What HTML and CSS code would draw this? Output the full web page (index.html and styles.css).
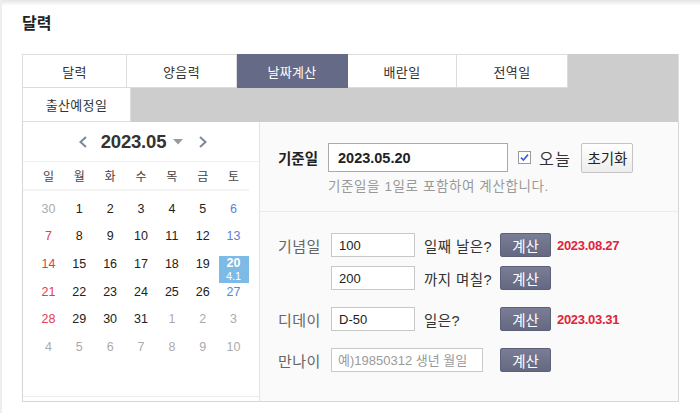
FILE: index.html
```html
<!DOCTYPE html>
<html lang="ko">
<head>
<meta charset="utf-8">
<title>달력</title>
<link rel="stylesheet" href="styles.css">
</head>
<body>
<div class="page">
  <div class="topbar"></div>
  <h2 class="title">달력</h2>
  <div class="tabs">
    <div class="tabrow">
      <a class="tab t1">달력</a>
      <a class="tab t2">양음력</a>
      <a class="tab t3 active">날짜계산</a>
      <a class="tab t4">배란일</a>
      <a class="tab t5">전역일</a>
    </div>
    <div class="tabrow">
      <a class="tab t6">출산예정일</a>
    </div>
  </div>
  <div class="panel">
    <div class="cal">
      <div class="cal-head">
        <svg class="prev" width="10" height="12" viewBox="0 0 10 12"><path d="M8 1 L2.5 6 L8 11" fill="none" stroke="#7d879c" stroke-width="2"/></svg>
        <span class="ym">2023.05</span>
        <svg class="caret" width="10" height="6" viewBox="0 0 10 6"><path d="M0 0 H10 L5 5.5 Z" fill="#9a9a9a"/></svg>
        <svg class="next" width="10" height="12" viewBox="0 0 10 12"><path d="M2 1 L7.5 6 L2 11" fill="none" stroke="#7d879c" stroke-width="2"/></svg>
      </div>
      <div class="week">
        <span>일</span><span>월</span><span>화</span><span>수</span><span>목</span><span>금</span><span>토</span>
      </div>
      <div class="days">
        <div class="d other"><span>30</span></div><div class="d"><span>1</span></div><div class="d"><span>2</span></div><div class="d"><span>3</span></div><div class="d"><span>4</span></div><div class="d"><span>5</span></div><div class="d sat"><span>6</span></div>
        <div class="d sun"><span>7</span></div><div class="d"><span>8</span></div><div class="d"><span>9</span></div><div class="d"><span>10</span></div><div class="d"><span>11</span></div><div class="d"><span>12</span></div><div class="d sat"><span>13</span></div>
        <div class="d sun"><span>14</span></div><div class="d"><span>15</span></div><div class="d"><span>16</span></div><div class="d"><span>17</span></div><div class="d"><span>18</span></div><div class="d"><span>19</span></div><div class="d today"><span>20<small>4.1</small></span></div>
        <div class="d sun"><span>21</span></div><div class="d"><span>22</span></div><div class="d"><span>23</span></div><div class="d"><span>24</span></div><div class="d"><span>25</span></div><div class="d"><span>26</span></div><div class="d sat"><span>27</span></div>
        <div class="d sun"><span>28</span></div><div class="d"><span>29</span></div><div class="d"><span>30</span></div><div class="d"><span>31</span></div><div class="d other"><span>1</span></div><div class="d other"><span>2</span></div><div class="d other"><span>3</span></div>
        <div class="d other"><span>4</span></div><div class="d other"><span>5</span></div><div class="d other"><span>6</span></div><div class="d other"><span>7</span></div><div class="d other"><span>8</span></div><div class="d other"><span>9</span></div><div class="d other"><span>10</span></div>
      </div>
      <div class="cal-foot"></div>
    </div>
    <div class="calc">
      <div class="base">
        <div class="base-row">
          <span class="base-label">기준일</span>
          <input class="base-input" type="text" value="2023.05.20">
          <svg class="chk" width="13" height="13" viewBox="0 0 13 13"><rect x="0.5" y="0.5" width="12" height="12" fill="#fff" stroke="#9a9a9a"/><path d="M3 6.7 L5.4 9.1 L10 3.6" fill="none" stroke="#3d62e0" stroke-width="1.7"/></svg>
          <span class="today-label">오늘</span>
          <button class="reset">초기화</button>
        </div>
        <p class="hint">기준일을 1일로 포함하여 계산합니다.</p>
      </div>
      <div class="rows">
        <div class="row">
          <span class="label">기념일</span>
          <input class="field" type="text" value="100">
          <span class="q">일째 날은?</span>
          <button class="go">계산</button>
          <span class="res">2023.08.27</span>
        </div>
        <div class="row r2">
          <span class="label"></span>
          <input class="field" type="text" value="200">
          <span class="q">까지 며칠?</span>
          <button class="go">계산</button>
        </div>
        <div class="row r3">
          <span class="label">디데이</span>
          <input class="field" type="text" value="D-50">
          <span class="q">일은?</span>
          <button class="go">계산</button>
          <span class="res">2023.03.31</span>
        </div>
        <div class="row r3">
          <span class="label">만나이</span>
          <input class="field wide" type="text" placeholder="예)19850312 생년 월일">
          <button class="go">계산</button>
        </div>
      </div>
    </div>
  </div>
</div>
</body>
</html>
```
FILE: styles.css
```css
html, body {
  margin: 0;
  padding: 0;
  background: #fff;
}
body {
  font-family: "Liberation Sans", "Noto Sans CJK KR", sans-serif;
  color: #333;
}
.page {
  height: 413px;
  box-sizing: border-box;
  border-left: 2px solid #eceef2;
  padding-left: 20px;
  overflow: hidden;
}
.topbar {
  height: 6px;
  margin-left: -20px;
  background: linear-gradient(#e4e4e4, #fff);
}
.title {
  margin: 8px 0 0;
  font-size: 16px;
  line-height: 20px;
  font-weight: bold;
  color: #222;
}
.tabs {
  margin-top: 20px;
  width: 657px;
  box-sizing: border-box;
  background: #cdcdcd;
  border-right: 1px solid #e0e0e0;
}
.tabrow {
  display: flex;
  height: 34px;
}
.tab {
  box-sizing: border-box;
  height: 34px;
  background: #fff;
  border: 1px solid #dcdcdc;
  border-left: none;
  display: flex;
  align-items: center;
  justify-content: center;
  font-size: 13px;
  letter-spacing: 0.3px;
  color: #333;
}
.t1 { width: 105px; border-left: 1px solid #dcdcdc; }
.t2 { width: 110px; }
.t3 { width: 111px; }
.t4 { width: 109px; }
.t5 { width: 111px; }
.t6 { width: 109px; border-left: 1px solid #dcdcdc; border-top: none; }
.tab.active {
  background: #656a87;
  border-color: #656a87;
  color: #fff;
}
.panel {
  display: flex;
  width: 657px;
  height: 280px;
  box-sizing: border-box;
  border: 1px solid #d6d6d6;
  border-top: none;
}
.cal {
  width: 237px;
  box-sizing: border-box;
  border-right: 1px solid #e4e4e4;
  display: flex;
  flex-direction: column;
  background: #fff;
}
.cal-head {
  height: 40px;
  box-sizing: border-box;
  border-bottom: 1px solid #f0f0f0;
  display: flex;
  align-items: center;
  justify-content: center;
  padding-left: 4px;
}
.ym {
  font-size: 18.5px;
  font-weight: bold;
  color: #333;
  margin: 0 7px 0 13px;
  letter-spacing: -0.2px;
}
.caret { margin-right: 15px; margin-top: 1px; }
.week {
  width: 226px;
  height: 29px;
  box-sizing: border-box;
  padding-left: 10px;
  border-bottom: 2px solid #f3f3f3;
  display: grid;
  grid-template-columns: repeat(7, 1fr);
  align-items: center;
  font-size: 12px;
  color: #444;
}
.week span { text-align: center; }
.days {
  margin-left: 10px;
  width: 216px;
  padding-top: 4px;
  display: grid;
  grid-template-columns: repeat(7, 1fr);
  grid-auto-rows: 27.6px;
  font-size: 12.5px;
  color: #222;
}
.d {
  display: flex;
  justify-content: center;
  align-items: flex-start;
  padding-top: 6.8px;
  box-sizing: border-box;
}
.d span {
  display: block;
  line-height: 14px;
  text-align: center;
}
.d.sun { color: #e23a50; }
.d.sat { color: #5b84d4; }
.d.other { color: #ababab; }
.d.today span {
  width: 30px;
  background: #7dbae6;
  color: #fff;
  font-weight: bold;
  margin-top: -0.5px;
}
.d.today small {
  display: block;
  font-size: 11px;
  font-weight: normal;
  line-height: 13px;
}
.cal-foot {
  flex: 1;
  border-bottom: 1px solid #ececec;
  margin-bottom: 4px;
}
.calc {
  flex: 1;
  background: #fafafa;
  display: flex;
  flex-direction: column;
}
.base {
  height: 90px;
  box-sizing: border-box;
  border-bottom: 1px solid #ececec;
  padding: 21px 0 0 18px;
}
.base-row {
  display: flex;
  align-items: center;
  height: 29px;
}
.base-label {
  width: 50px;
  font-size: 14.5px;
  font-weight: bold;
  color: #222;
}
.base-input {
  width: 180px;
  height: 29px;
  box-sizing: border-box;
  border: 1px solid #aaa;
  background: #fff;
  padding: 0 0 0 9px;
  margin: 0;
  font-family: "Liberation Sans", "Noto Sans CJK KR", sans-serif;
  font-size: 14.5px;
  font-weight: bold;
  color: #222;
  outline: none;
}
.chk { margin-left: 10px; }
.today-label {
  margin-left: 8px;
  font-size: 16px;
  letter-spacing: 1.5px;
  color: #333;
}
.reset {
  margin: 0 0 0 10px;
  width: 52px;
  height: 30px;
  padding: 0;
  border: 1px solid #c4c4c4;
  border-radius: 2px;
  background: linear-gradient(#fff, #ededed);
  font-family: "Liberation Sans", "Noto Sans CJK KR", sans-serif;
  font-size: 14.5px;
  color: #222;
}
.hint {
  margin: 7px 0 0 50px;
  font-size: 13.5px;
  letter-spacing: 0.6px;
  line-height: 16px;
  color: #999;
}
.rows {
  padding: 21px 0 0 18px;
}
.row {
  display: flex;
  align-items: center;
  height: 24px;
}
.row.r2 { margin-top: 9px; }
.row.r3 { margin-top: 17px; }
.label {
  width: 53px;
  font-size: 15px;
  letter-spacing: 0.5px;
  color: #666;
}
.field {
  width: 84px;
  height: 24px;
  box-sizing: border-box;
  border: 1px solid #c8c8c8;
  background: #fff;
  padding: 0 0 0 7px;
  margin: 0;
  font-family: "Liberation Sans", "Noto Sans CJK KR", sans-serif;
  font-size: 13px;
  color: #222;
  outline: none;
}
.field.wide {
  width: 152px;
  margin-right: 17px;
  padding-left: 6px;
}
.field::placeholder { color: #9a9a9a; }
.q {
  margin-left: 9px;
  width: 76px;
  font-size: 14.5px;
  letter-spacing: 0.4px;
  color: #333;
}
.go {
  width: 51px;
  height: 24px;
  margin: 0;
  padding: 0;
  border: 1px solid #5d6079;
  border-radius: 2px;
  background: linear-gradient(#7a7d95, #656882);
  font-family: "Liberation Sans", "Noto Sans CJK KR", sans-serif;
  font-size: 14.5px;
  color: #fff;
}
.res {
  margin-left: 6px;
  font-size: 13px;
  font-weight: bold;
  letter-spacing: -0.3px;
  color: #e0233b;
}
```
